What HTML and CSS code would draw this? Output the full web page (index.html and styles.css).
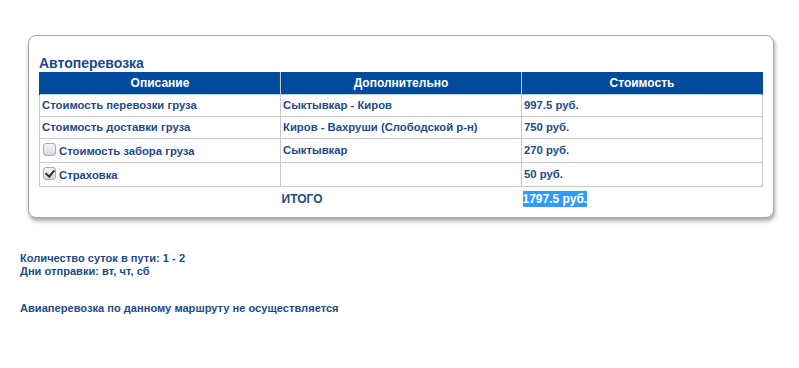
FILE: index.html
```html
<!DOCTYPE html>
<html lang="ru">
  <head>
    <meta charset="UTF-8" />
    <meta name="viewport" content="width=device-width, initial-scale=1.0" />
    <title>Расчет стоимости</title>
    <link rel="stylesheet" href="styles.css">
  </head>
  <body>
    <div class="panel">
      <h2>Автоперевозка</h2>
      <table class="calc">
        <tr>
          <th>Описание</th>
          <th>Дополнительно</th>
          <th>Стоимость</th>
        </tr>
        <tr>
          <td>Стоимость перевозки груза</td>
          <td>Сыктывкар - Киров</td>
          <td>997.5 руб.</td>
        </tr>
        <tr>
          <td>Стоимость доставки груза</td>
          <td>Киров - Вахруши (Слободской р-н)</td>
          <td>750 руб.</td>
        </tr>
        <tr>
          <td class="opt"><label><input type="checkbox" class="chk">Стоимость забора груза</label></td>
          <td>Сыктывкар</td>
          <td>270 руб.</td>
        </tr>
        <tr>
          <td class="opt"><label><input type="checkbox" class="chk" checked>Страховка</label></td>
          <td></td>
          <td>50 руб.</td>
        </tr>
        <tr class="total">
          <td></td>
          <td>ИТОГО</td>
          <td><span class="sel">1797.5 руб.</span></td>
        </tr>
      </table>
    </div>

    <p class="info">Количество суток в пути: 1 - 2<br>Дни отправки: вт, чт, сб</p>
    <p class="info">Авиаперевозка по данному маршруту не осуществляется</p>
  </body>
</html>
```

FILE: styles.css
```css
body {
  margin: 0;
  padding: 35px 20px 0 20px;
  font-family: "Liberation Sans", Arial, sans-serif;
  font-size: 11.1px;
  font-weight: bold;
  color: #1d4a86;
  background: #fff;
}
.panel {
  margin-left: 8px;
  width: 724px;
  padding: 19px 10px 9px 10px;
  border: 1px solid #a8a8a8;
  border-radius: 8px;
  box-shadow: 1px 3px 4px rgba(0, 0, 0, 0.35);
  background: #fff;
}
.panel h2 {
  margin: 0;
  font-size: 14px;
  line-height: 17px;
  color: #1a4a8c;
}
.calc {
  width: 724px;
  border-collapse: collapse;
  table-layout: fixed;
  font-size: 11.3px;
}
.calc th {
  background: #024b9d;
  color: #fff;
  font-size: 12px;
  line-height: 14px;
  padding: 4px 4px 4px 4px;
  border: 1px solid #c8c8c8;
  border-top: none;
  border-bottom: none;
}
.calc th:first-child {
  border-left-color: #024b9d;
}
.calc th:last-child {
  border-right-color: #024b9d;
}
.calc td {
  border: 1px solid #c8c8c8;
  padding: 4px 2px;
  line-height: 13px;
  vertical-align: middle;
}
.calc td.opt {
  padding: 6px 2px 4px 2px;
}
.chk {
  -webkit-appearance: none;
  appearance: none;
  width: 13px;
  height: 13px;
  margin: -2px 3px 0 1px;
  vertical-align: top;
  border: 1px solid #a9a9a9;
  border-radius: 3px;
  background: linear-gradient(#f6f6f6, #d8d8d8);
  position: relative;
}
.chk:checked::after {
  content: "";
  position: absolute;
  left: 3px;
  top: 0px;
  width: 4px;
  height: 7px;
  border: solid #333;
  border-width: 0 2px 2px 0;
  transform: rotate(40deg);
}
.calc tr.total td {
  border: none;
  padding: 6px 1px 2px 1px;
  font-size: 12px;
}
.sel {
  background: #3399ff;
  color: #fff;
  padding: 1px 0;
}
.info {
  margin: 0;
  line-height: 12.5px;
}
.panel + .info {
  margin-top: 34px;
}
.info + .info {
  margin-top: 25px;
}
```
